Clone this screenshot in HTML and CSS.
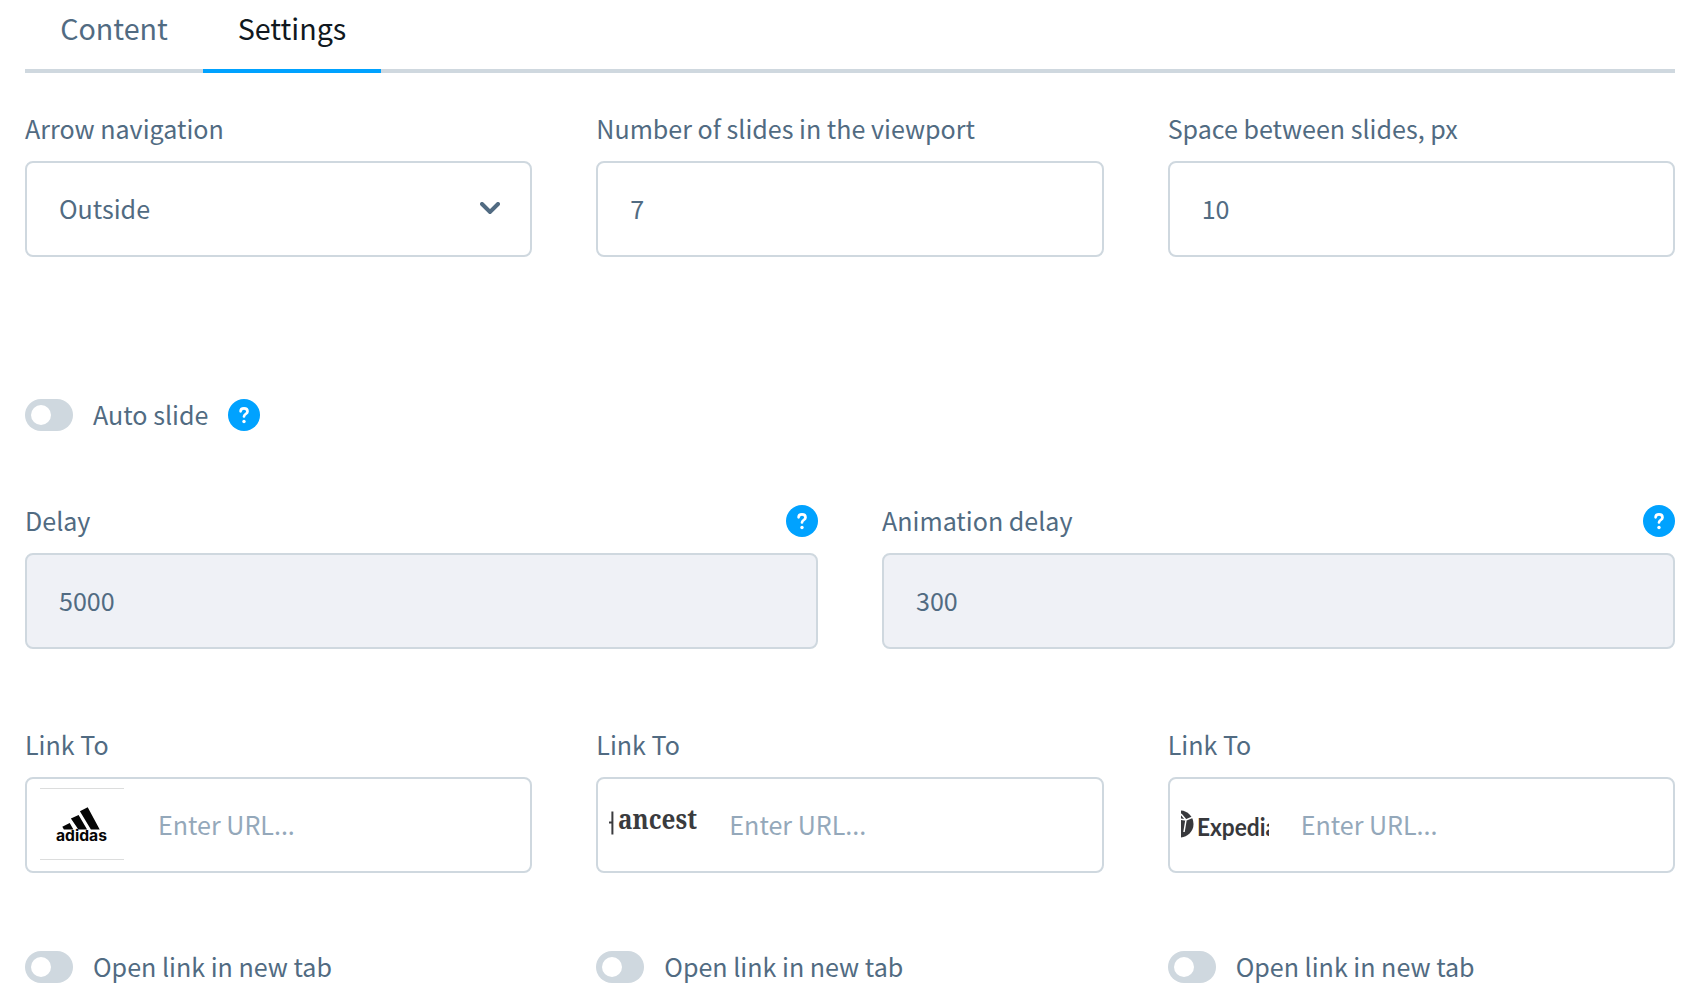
FILE: index.html
```html
<!DOCTYPE html>
<html lang="en">
<head>
<meta charset="utf-8">
<title>Slider settings</title>
<link rel="stylesheet" href="styles.css">
</head>
<body>
<svg class="sprite" aria-hidden="true">
  <symbol id="help" viewBox="0 0 32 32">
    <circle cx="16" cy="16" r="16" fill="#00a2ff"/>
    <path d="M12.6 12.3C12.6 10.4 14 9.4 16 9.4s3.5 1.1 3.5 3c0 2.600-3.500 2.600-3.500 5.100" fill="none" stroke="#fff" stroke-width="2.700" stroke-linecap="round"/>
    <circle cx="16" cy="22.500" r="1.700" fill="#fff"/>
  </symbol>
</svg>
<main class="panel">
  <nav class="tabs">
    <a class="tab">Content</a>
    <a class="tab tab-active">Settings</a>
  </nav>

  <section class="grid three general">
    <div class="field">
      <div class="label">Arrow navigation</div>
      <div class="box select"><span>Outside</span>
        <svg class="chevron" viewBox="0 0 20 12"><path d="M2 2l8 8 8-8" fill="none" stroke="#516b82" stroke-width="4" stroke-linecap="round" stroke-linejoin="miter"/></svg>
      </div>
    </div>
    <div class="field"><div class="label">Number of slides in the viewport</div><div class="box"><span>7</span></div></div>
    <div class="field"><div class="label">Space between slides, px</div><div class="box"><span>10</span></div></div>
  </section>

  <div class="switch-row auto"><span class="switch"></span><span class="text">Auto slide</span><svg class="help"><use href="#help"/></svg></div>

  <section class="grid two timing">
    <div class="field"><div class="label">Delay<svg class="help"><use href="#help"/></svg></div><div class="box disabled"><span>5000</span></div></div>
    <div class="field"><div class="label">Animation delay<svg class="help"><use href="#help"/></svg></div><div class="box disabled"><span>300</span></div></div>
  </section>

  <section class="grid three links">
    <div class="field">
      <div class="label">Link To</div>
      <div class="box link">
        <svg class="thumb" viewBox="0 0 88 72">
          <path d="M2 .5h84M2 71.500h84" stroke="#dcdddd"/>
          <path d="M41.900 23.300l7.800-4 12 22.300h-8.800zM32.900 30.600l7.700-3.600 8.500 14.600h-8.700zM24.300 38.700l7.400-3.800 3.700 6.700h-9.500z" fill="#050505"/>
          <text class="adidas" x="18" y="53.300" textLength="51" lengthAdjust="spacingAndGlyphs">adidas</text>
        </svg>
        <span>Enter URL...</span>
      </div>
    </div>
    <div class="field">
      <div class="label">Link To</div>
      <div class="box link">
        <svg class="thumb" viewBox="0 0 88 72">
          <path d="M3.400 23.500v23M0 34.500h3" stroke="#3a3b3e" stroke-width="2"/>
          <text class="ancest" x="9" y="41" textLength="79" lengthAdjust="spacingAndGlyphs">ancest</text>
        </svg>
        <span>Enter URL...</span>
      </div>
    </div>
    <div class="field">
      <div class="label">Link To</div>
      <div class="box link">
        <svg class="thumb" viewBox="0 0 88 72">
          <circle cx="-1" cy="36" r="13.500" fill="#37383c"/>
          <path d="M-1 31l6 1 7-3M5 32l-2 12M0 26l5 6" fill="none" stroke="#fff" stroke-width="1.500"/>
          <text class="expedia" x="16" y="48" textLength="80" lengthAdjust="spacingAndGlyphs">Expedia</text>
        </svg>
        <span>Enter URL...</span>
      </div>
    </div>
  </section>

  <section class="grid three targets">
    <div class="switch-row"><span class="switch"></span><span class="text">Open link in new tab</span></div>
    <div class="switch-row"><span class="switch"></span><span class="text">Open link in new tab</span></div>
    <div class="switch-row"><span class="switch"></span><span class="text">Open link in new tab</span></div>
  </section>
</main>
</body>
</html>
```
FILE: styles.css
```css
* { box-sizing: border-box; }
body {
  margin: 0;
  background: #fff;
  color: #516b82;
  font: 25.07px/32px "Noto Sans CJK SC", "Noto Sans", sans-serif;
}
.sprite { display: none; }
.panel { padding: 0 24px 0 25px; }

.tabs {
  display: flex;
  height: 73px;
  box-shadow: inset 0 -4px #cfd8df;
  font-size: 28.65px;
  line-height: 56px;
}
.tab { width: 178px; height: 73px; text-align: center; }
.tab-active { color: #101820; border-bottom: 4px solid #00a2ff; }

.grid { display: grid; column-gap: 64px; }
.three { grid-template-columns: repeat(3, 1fr); }
.two { grid-template-columns: repeat(2, 1fr); }
.general { margin-top: 39px; }
.auto { margin-top: 142px; }
.timing { margin-top: 73px; }
.links { margin-top: 79px; }
.targets { margin-top: 78px; }

.label {
  display: flex;
  justify-content: space-between;
  height: 49px;
}
.label .help { margin-top: 1px; }
.help { width: 32px; height: 32px; flex: none; }

.box {
  display: flex;
  align-items: center;
  height: 96px;
  padding: 0 30px 2px 32px;
  border: 2px solid #cfd8df;
  border-radius: 8px;
}
.select { justify-content: space-between; }
.chevron { width: 20px; height: 12px; }
.disabled { background: #eff1f6; }
.link { padding-left: 11px; gap: 32px; color: #94a8ba; }
.thumb { width: 88px; height: 72px; flex: none; overflow: hidden; }

.adidas { font: 700 15px "Inter", sans-serif; fill: #050505; }
.ancest { font: 700 27px "Noto Serif", "Liberation Serif", serif; fill: #3a3b3e; }
.expedia { font: 700 25px "Lato", sans-serif; fill: #37383c; }

.switch-row { display: flex; align-items: center; height: 32px; }
.switch {
  width: 48px;
  height: 32px;
  padding: 6px;
  border-radius: 16px;
  background: #cfd8df;
}
.switch::before {
  content: "";
  display: block;
  width: 20px;
  height: 20px;
  border-radius: 50%;
  background: #fff;
}
.switch-row .text { margin: -2px 20px 0; }
```
